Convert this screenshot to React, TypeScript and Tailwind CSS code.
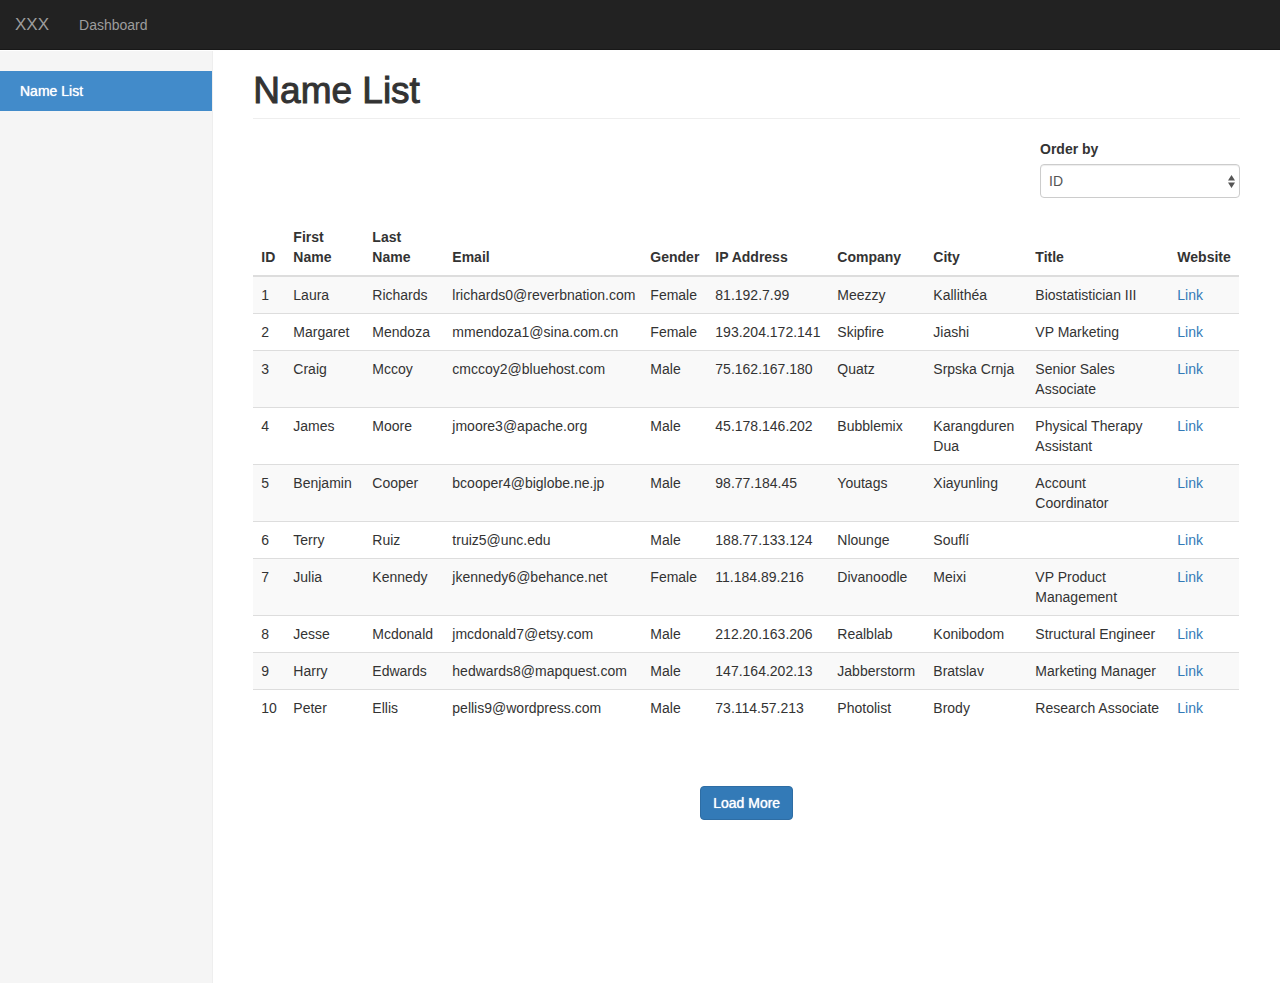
import { useState } from "react";

type Person = {
  id: number;
  first: string;
  last: string;
  email: string;
  gender: string;
  ip: string;
  company: string;
  city: string;
  title: string;
};

const people: Person[] = [
  { id: 1, first: "Laura", last: "Richards", email: "lrichards0@reverbnation.com", gender: "Female", ip: "81.192.7.99", company: "Meezzy", city: "Kallithéa", title: "Biostatistician III" },
  { id: 2, first: "Margaret", last: "Mendoza", email: "mmendoza1@sina.com.cn", gender: "Female", ip: "193.204.172.141", company: "Skipfire", city: "Jiashi", title: "VP Marketing" },
  { id: 3, first: "Craig", last: "Mccoy", email: "cmccoy2@bluehost.com", gender: "Male", ip: "75.162.167.180", company: "Quatz", city: "Srpska Crnja", title: "Senior Sales Associate" },
  { id: 4, first: "James", last: "Moore", email: "jmoore3@apache.org", gender: "Male", ip: "45.178.146.202", company: "Bubblemix", city: "Karangduren Dua", title: "Physical Therapy Assistant" },
  { id: 5, first: "Benjamin", last: "Cooper", email: "bcooper4@biglobe.ne.jp", gender: "Male", ip: "98.77.184.45", company: "Youtags", city: "Xiayunling", title: "Account Coordinator" },
  { id: 6, first: "Terry", last: "Ruiz", email: "truiz5@unc.edu", gender: "Male", ip: "188.77.133.124", company: "Nlounge", city: "Souflí", title: "" },
  { id: 7, first: "Julia", last: "Kennedy", email: "jkennedy6@behance.net", gender: "Female", ip: "11.184.89.216", company: "Divanoodle", city: "Meixi", title: "VP Product Management" },
  { id: 8, first: "Jesse", last: "Mcdonald", email: "jmcdonald7@etsy.com", gender: "Male", ip: "212.20.163.206", company: "Realblab", city: "Konibodom", title: "Structural Engineer" },
  { id: 9, first: "Harry", last: "Edwards", email: "hedwards8@mapquest.com", gender: "Male", ip: "147.164.202.13", company: "Jabberstorm", city: "Bratslav", title: "Marketing Manager" },
  { id: 10, first: "Peter", last: "Ellis", email: "pellis9@wordpress.com", gender: "Male", ip: "73.114.57.213", company: "Photolist", city: "Brody", title: "Research Associate" },
];

const columns: { key: keyof Person | "website"; label: string; width: string }[] = [
  { key: "id", label: "ID", width: "w-[32px]" },
  { key: "first", label: "First Name", width: "w-[79px]" },
  { key: "last", label: "Last Name", width: "w-[80px]" },
  { key: "email", label: "Email", width: "w-[198px]" },
  { key: "gender", label: "Gender", width: "w-[65px]" },
  { key: "ip", label: "IP Address", width: "w-[122px]" },
  { key: "company", label: "Company", width: "w-[96px]" },
  { key: "city", label: "City", width: "w-[102px]" },
  { key: "title", label: "Title", width: "w-[142px]" },
  { key: "website", label: "Website", width: "w-[70px]" },
];

function Navbar() {
  return (
    <nav className="flex h-[50px] items-center border-b border-[#181818] bg-[#222] text-[#9d9d9d]">
      <a href="#" className="px-[15px] text-[17px] leading-5">XXX</a>
      <a href="#dashboard" className="px-[15px] leading-5">Dashboard</a>
    </nav>
  );
}

function Sidebar() {
  return (
    <aside className="w-1/6 shrink-0 border-r border-[#eee] bg-[#f5f5f5] pt-5">
      <a href="#names" className="block bg-[#428bca] px-5 py-[10px] text-white [text-shadow:0_0_1px_currentColor]">
        Name List
      </a>
    </aside>
  );
}

function NameTable({ rows }: { rows: Person[] }) {
  return (
    <table className="w-full table-fixed border-separate border-spacing-0">
      <thead>
        <tr>
          {columns.map((c) => (
            <th key={c.key} scope="col" className={`${c.width} border-b-2 border-[#ddd] p-2 text-left align-bottom font-bold`}>
              {c.label}
            </th>
          ))}
        </tr>
      </thead>
      <tbody>
        {rows.map((p, i) => (
          <tr key={p.id} className="odd:bg-[#f9f9f9]">
            {columns.map((c) => (
              <td key={c.key} className={`p-2 align-top ${i > 0 ? "border-t border-[#ddd]" : ""}`}>
                {c.key === "website" ? <a href="#website" className="text-[#337ab7]">Link</a> : p[c.key]}
              </td>
            ))}
          </tr>
        ))}
      </tbody>
    </table>
  );
}

export default function App() {
  const [order, setOrder] = useState<keyof Person>("id");
  const rows = [...people].sort((a, b) => (a[order] > b[order] ? 1 : a[order] < b[order] ? -1 : 0));

  return (
    <div className="flex min-h-screen flex-col bg-white font-['Liberation_Sans',Arial,sans-serif] text-[14px] leading-5 text-[#333]">
      <Navbar />
      <div className="flex grow pt-px">
        <Sidebar />
        <main className="min-w-0 grow px-10 pt-5 pb-10">
          <h1 className="border-b border-[#eee] pb-2 text-[37px] leading-[39px] [-webkit-text-stroke:1px_#333]">Name List</h1>
          <div className="mt-5 ml-auto w-[200px]">
            <label htmlFor="order" className="mb-[5px] block font-bold">Order by</label>
            <div className="relative">
              <select
                id="order"
                value={order}
                onChange={(e) => setOrder(e.target.value as keyof Person)}
                className="block h-[34px] w-full appearance-none rounded border border-[#ccc] bg-white px-2 text-[14px] text-[#555] shadow-[inset_0_1px_1px_rgba(0,0,0,0.075)]"
              >
                {columns.filter((c) => c.key !== "website").map((c) => (
                  <option key={c.key} value={c.key}>{c.label}</option>
                ))}
              </select>
              <svg aria-hidden="true" viewBox="0 0 7 13" className="pointer-events-none absolute top-[11px] right-[5px] h-[13px] w-[7px] fill-[#555]">
                <path d="M3.5 0 7 5.4H0ZM3.5 13 0 7.6h7Z" />
              </svg>
            </div>
          </div>
          <div className="mt-[21px] pr-px">
            <NameTable rows={rows} />
          </div>
          <div className="mt-[60px] flex justify-center">
            <button type="button" className="rounded border border-[#2e6da4] bg-[#337ab7] px-3 py-1.5 text-white [text-shadow:0_0_1px_currentColor]">
              Load More
            </button>
          </div>
        </main>
      </div>
    </div>
  );
}
